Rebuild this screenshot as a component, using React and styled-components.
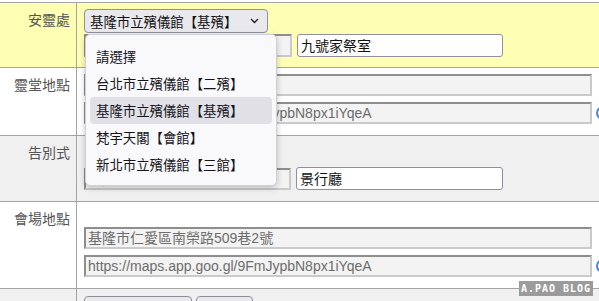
import React from "react";
import styled, { createGlobalStyle } from "styled-components";

const GlobalStyle = createGlobalStyle`
  html, body { margin: 0; padding: 0; overflow: hidden; background: #fff; }
  body { font-family: "Liberation Sans", "Noto Sans CJK TC", sans-serif; }
  * { box-sizing: border-box; }
`;

const Page = styled.div`
  position: relative;
  width: 599px;
  height: 301px;
  padding-top: 2px;
  overflow: hidden;
`;

const Table = styled.div`
  border-top: 1px solid #a4a4a4;
`;

const Row = styled.div`
  display: grid;
  grid-template-columns: 77px 1fr;
  background: ${(p) => p.$bg};
  border-bottom: 1px solid #a4a4a4;
`;

const Label = styled.div`
  border-right: 1px solid #a4a4a4;
  text-align: right;
  padding: 6px 6px 0 0;
  font-size: 14px;
  line-height: 20px;
  color: #555;
  font-family: "Noto Sans CJK TC", sans-serif;
`;

const Cell = styled.div`
  display: flex;
  flex-direction: column;
  align-items: flex-start;
  gap: ${(p) => p.$gap}px;
  padding: ${(p) => p.$pt ?? 6}px 0 ${(p) => p.$pb}px 7px;
  min-width: 0;
`;

const Line = styled.div`
  display: flex;
  align-items: center;
  gap: ${(p) => p.$gap ?? 5}px;
  flex-shrink: 0;
`;

const Spacer = styled.div`
  height: ${(p) => p.$h}px;
`;

const SelectWrap = styled.div`
  position: relative;
  width: 184px;
  height: 24px;
`;

const SelectBox = styled.div`
  display: flex;
  align-items: center;
  justify-content: space-between;
  width: 100%;
  height: 100%;
  padding: 0 8px 0 5px;
  background: #e9e9ed;
  border: 1px solid #8f8f9d;
  border-radius: 4px;
  font-size: 13.4px;
  color: #111;
  font-family: "Noto Sans CJK TC", sans-serif;
  white-space: nowrap;
`;

const Menu = styled.div`
  position: absolute;
  z-index: 10;
  top: calc(100% + 1px);
  left: 1px;
  width: 192px;
  padding: 8px 4px 7px;
  background: #f9f9fb;
  border: 1px solid #cfcfd8;
  border-radius: 5px;
  box-shadow: 0 2px 6px rgba(0, 0, 0, 0.22);
`;

const Option = styled.div`
  height: 27px;
  line-height: 27px;
  padding-left: 6px;
  border-radius: 4px;
  font-size: 13.4px;
  color: #15141a;
  font-family: "Noto Sans CJK TC", sans-serif;
  white-space: nowrap;
  background: ${(p) => (p.$active ? "#e0e0e6" : "transparent")};
`;

const GrayInput = styled.div`
  flex-shrink: 0;
  width: ${(p) => p.$w}px;
  height: ${(p) => p.$h ?? 22}px;
  background: #f3f3f3;
  border-style: solid;
  border-width: 2px;
  border-color: #8e8e8e #cacaca #cacaca #8e8e8e;
  padding: 0 2px;
  font-size: 14px;
  line-height: 18px;
  color: #6d6d6d;
  white-space: nowrap;
  overflow: hidden;
`;

const TextInput = styled.div`
  flex-shrink: 0;
  width: ${(p) => p.$w}px;
  height: 23px;
  background: #fff;
  border: 1px solid #8f8f9d;
  border-radius: 3px;
  padding: 0 3px;
  font-size: 14px;
  line-height: 21px;
  color: #111;
  font-family: "Noto Sans CJK TC", sans-serif;
  white-space: nowrap;
`;

const MapIcon = styled.span`
  flex-shrink: 0;
  width: 14px;
  height: 14px;
  border-radius: 50%;
  border: 2px solid #4a86d8;
  background: #fff;
`;

const Button = styled.button`
  flex-shrink: 0;
  width: ${(p) => p.$w}px;
  height: 24px;
  background: #e9e9ed;
  border: 1px solid #8f8f9d;
  border-radius: 4px;
`;

const Watermark = styled.div`
  position: absolute;
  right: 6px;
  bottom: 5px;
  width: 74px;
  height: 15px;
  background: #9b9b9b;
  color: #fff;
  font-family: "DejaVu Sans Mono", monospace;
  font-weight: bold;
  font-size: 10px;
  line-height: 15px;
  letter-spacing: 1px;
  text-align: center;
  white-space: nowrap;
`;

const Chevron = () => (
  <svg width="9" height="6" viewBox="0 0 9 6">
    <polyline points="1,1 4.5,4.5 8,1" fill="none" stroke="#222" strokeWidth="1.4" />
  </svg>
);

const options = [
  "請選擇",
  "台北市立殯儀館【二殯】",
  "基隆市立殯儀館【基殯】",
  "梵宇天閣【會館】",
  "新北市立殯儀館【三館】",
];

const selected = "基隆市立殯儀館【基殯】";
const address = "基隆市仁愛區南榮路509巷2號";
const mapUrl = "https://maps.app.goo.gl/9FmJypbN8px1iYqeA";

export default function App() {
  return (
    <>
      <GlobalStyle />
      <Page>
        <Table>
          <Row $bg="#ffffb4">
            <Label>安靈處</Label>
            <Cell $gap={1} $pb={10}>
              <SelectWrap>
                <SelectBox>
                  <span>{selected}</span>
                  <Chevron />
                </SelectBox>
                <Menu>
                  {options.map((o) => (
                    <Option key={o} $active={o === selected}>
                      {o}
                    </Option>
                  ))}
                </Menu>
              </SelectWrap>
              <Line>
                <GrayInput $w={208} $h={23} />
                <TextInput $w={206}>九號家祭室</TextInput>
              </Line>
            </Cell>
          </Row>
          <Row $bg="#ffffff">
            <Label>靈堂地點</Label>
            <Cell $gap={6} $pb={11}>
              <GrayInput $w={508} />
              <Line $gap={4}>
                <GrayInput $w={508}>{mapUrl}</GrayInput>
                <MapIcon />
              </Line>
            </Cell>
          </Row>
          <Row $bg="#f0f0f0">
            <Label>告別式</Label>
            <Cell $gap={1} $pb={11}>
              <SelectWrap />
              <Line>
                <GrayInput $w={207}>{selected}</GrayInput>
                <TextInput $w={207}>景行廳</TextInput>
              </Line>
            </Cell>
          </Row>
          <Row $bg="#ffffff">
            <Label>會場地點</Label>
            <Cell $gap={6} $pb={11}>
              <Spacer $h={13} />
              <GrayInput $w={508}>{address}</GrayInput>
              <Line $gap={4}>
                <GrayInput $w={508}>{mapUrl}</GrayInput>
                <MapIcon />
              </Line>
            </Cell>
          </Row>
          <Row $bg="#f0f0f0">
            <Label></Label>
            <Cell $gap={0} $pb={8} $pt={7}>
              <Line $gap={4}>
                <Button $w={108} />
                <Button $w={57} />
              </Line>
            </Cell>
          </Row>
        </Table>
        <Watermark>A.PAO BLOG</Watermark>
      </Page>
    </>
  );
}
